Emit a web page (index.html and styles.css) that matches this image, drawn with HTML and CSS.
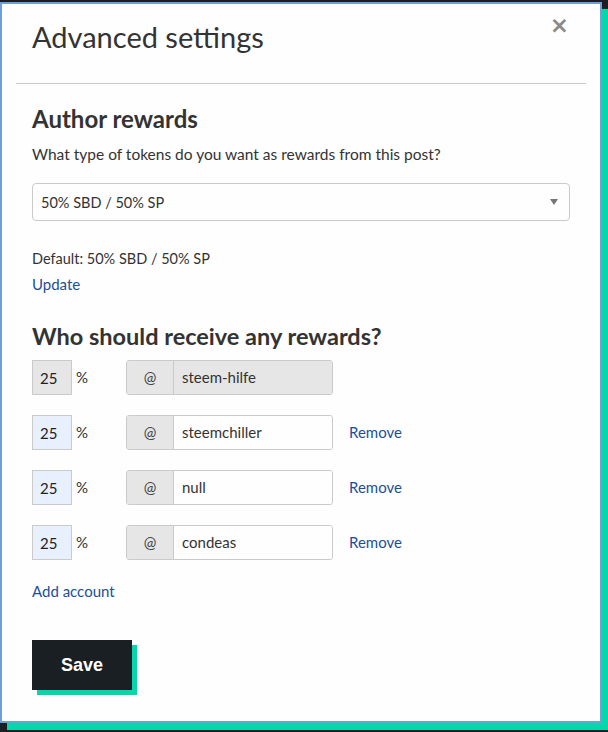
FILE: index.html
```html
<!DOCTYPE html>
<html lang="en">
<head>
    <meta charset="UTF-8">
    <meta name="viewport" content="width=device-width, initial-scale=1.0">
    <link rel="stylesheet" href="styles.css">
</head>
<body>
    <div class="modal">
        <button class="close-btn" aria-label="Close">&times;</button>
        <h2 class="modal-title">Advanced settings</h2>
        <hr class="divider">

        <div class="modal-body">
            <h3 class="section-title">Author rewards</h3>
            <p class="hint">What type of tokens do you want as rewards from this post?</p>

            <div class="select-box">
                <span>50% SBD / 50% SP</span>
                <span class="caret"></span>
            </div>

            <p class="default-line">Default: 50% SBD / 50% SP</p>
            <a class="link" href="#">Update</a>

            <h3 class="section-title beneficiaries-title">Who should receive any rewards?</h3>

            <div class="bene-row">
                <div class="pct disabled">25</div>
                <span class="pct-sign">%</span>
                <div class="account-group">
                    <span class="at">@</span>
                    <span class="account disabled">steem-hilfe</span>
                </div>
            </div>
            <div class="bene-row">
                <div class="pct">25</div>
                <span class="pct-sign">%</span>
                <div class="account-group">
                    <span class="at">@</span>
                    <span class="account">steemchiller</span>
                </div>
                <a class="link remove" href="#">Remove</a>
            </div>
            <div class="bene-row">
                <div class="pct">25</div>
                <span class="pct-sign">%</span>
                <div class="account-group">
                    <span class="at">@</span>
                    <span class="account">null</span>
                </div>
                <a class="link remove" href="#">Remove</a>
            </div>
            <div class="bene-row">
                <div class="pct">25</div>
                <span class="pct-sign">%</span>
                <div class="account-group">
                    <span class="at">@</span>
                    <span class="account">condeas</span>
                </div>
                <a class="link remove" href="#">Remove</a>
            </div>

            <a class="link add-account" href="#">Add account</a>

            <div class="actions">
                <button class="save-btn">Save</button>
            </div>
        </div>
    </div>
</body>
</html>
```

FILE: styles.css
```css
body {
    margin: 0;
    padding: 2px 0 0 0;
    background-color: #1b1e22;
    font-family: Lato, "Liberation Sans", sans-serif;
    color: #333;
    height: 730px;
    overflow: hidden;
}

.modal {
    position: relative;
    box-sizing: border-box;
    width: 602px;
    height: 721px;
    background-color: #fefefe;
    border: 2px solid #6f9fd9;
    box-shadow: 7px 7px 0 #06d6a9;
    padding: 0 14px;
}

.close-btn {
    position: absolute;
    top: 10px;
    right: 31px;
    border: none;
    background: none;
    color: #8a8a8a;
    font-size: 23px;
    font-weight: bold;
    line-height: 1;
    padding: 0;
    font-family: "DejaVu Sans", sans-serif;
}

.modal-title {
    margin: 0;
    padding: 15px 0 0 16px;
    font-size: 29px;
    font-weight: 400;
    line-height: 36px;
    color: #333;
}

.divider {
    margin: 28px 0 0 0;
    border: none;
    border-top: 1px solid #cacaca;
}

.modal-body {
    padding: 0 16px;
}

.section-title {
    margin: 21px 0 0 0;
    font-size: 24px;
    font-weight: 700;
    line-height: 28px;
}

.hint {
    margin: 11px 0 0 0;
    font-size: 15.5px;
    line-height: 20px;
}

.select-box {
    margin-top: 19px;
    width: 538px;
    height: 38px;
    box-sizing: border-box;
    border: 1px solid #cacaca;
    border-radius: 4px;
    display: flex;
    align-items: center;
    justify-content: space-between;
    padding: 0 10px 0 8px;
    font-size: 14.5px;
}

.caret {
    width: 0;
    height: 0;
    border-left: 4px solid transparent;
    border-right: 4px solid transparent;
    border-top: 6px solid #777;
    margin-right: 1px;
}

.default-line {
    margin: 28px 0 0 0;
    font-size: 14.5px;
    line-height: 20px;
}

.link {
    display: inline-block;
    color: #1a5099;
    text-decoration: none;
    font-size: 15px;
    line-height: 20px;
}

.default-line + .link {
    margin-top: 5px;
}

.beneficiaries-title {
    margin-top: 28px;
    font-size: 23.5px;
}

.bene-row {
    display: flex;
    align-items: flex-start;
    margin-top: 20px;
    height: 35px;
}

.beneficiaries-title + .bene-row {
    margin-top: 10px;
}

.pct {
    box-sizing: border-box;
    width: 40px;
    height: 35px;
    border: 1px solid #cacaca;
    background-color: #e8f0fe;
    font-size: 15px;
    line-height: 35px;
    padding-left: 7px;
    color: #222;
}

.pct.disabled {
    background-color: #e6e6e6;
}

.pct-sign {
    width: 50px;
    padding-left: 4px;
    font-size: 15px;
    line-height: 34px;
}

.account-group {
    display: flex;
    width: 207px;
    height: 35px;
    box-sizing: border-box;
    border: 1px solid #cacaca;
    border-radius: 3px;
    overflow: hidden;
    font-size: 15px;
}

.at {
    width: 46px;
    background-color: #e6e6e6;
    border-right: 1px solid #cacaca;
    text-align: center;
    line-height: 33px;
    color: #444;
}

.account {
    flex: 1;
    padding-left: 8px;
    line-height: 33px;
    background-color: #fefefe;
}

.account.disabled {
    background-color: #e6e6e6;
}

.remove {
    margin-left: 16px;
    line-height: 35px;
}

.add-account {
    margin-top: 21px;
}

.actions {
    margin-top: 39px;
}

.save-btn {
    width: 100px;
    height: 50px;
    border: none;
    background-color: #1a1f24;
    color: #fff;
    font-family: "Liberation Sans", Arial, sans-serif;
    font-size: 18px;
    font-weight: bold;
    box-shadow: 5px 5px 0 #06d6a9;
    padding: 0;
}
```
